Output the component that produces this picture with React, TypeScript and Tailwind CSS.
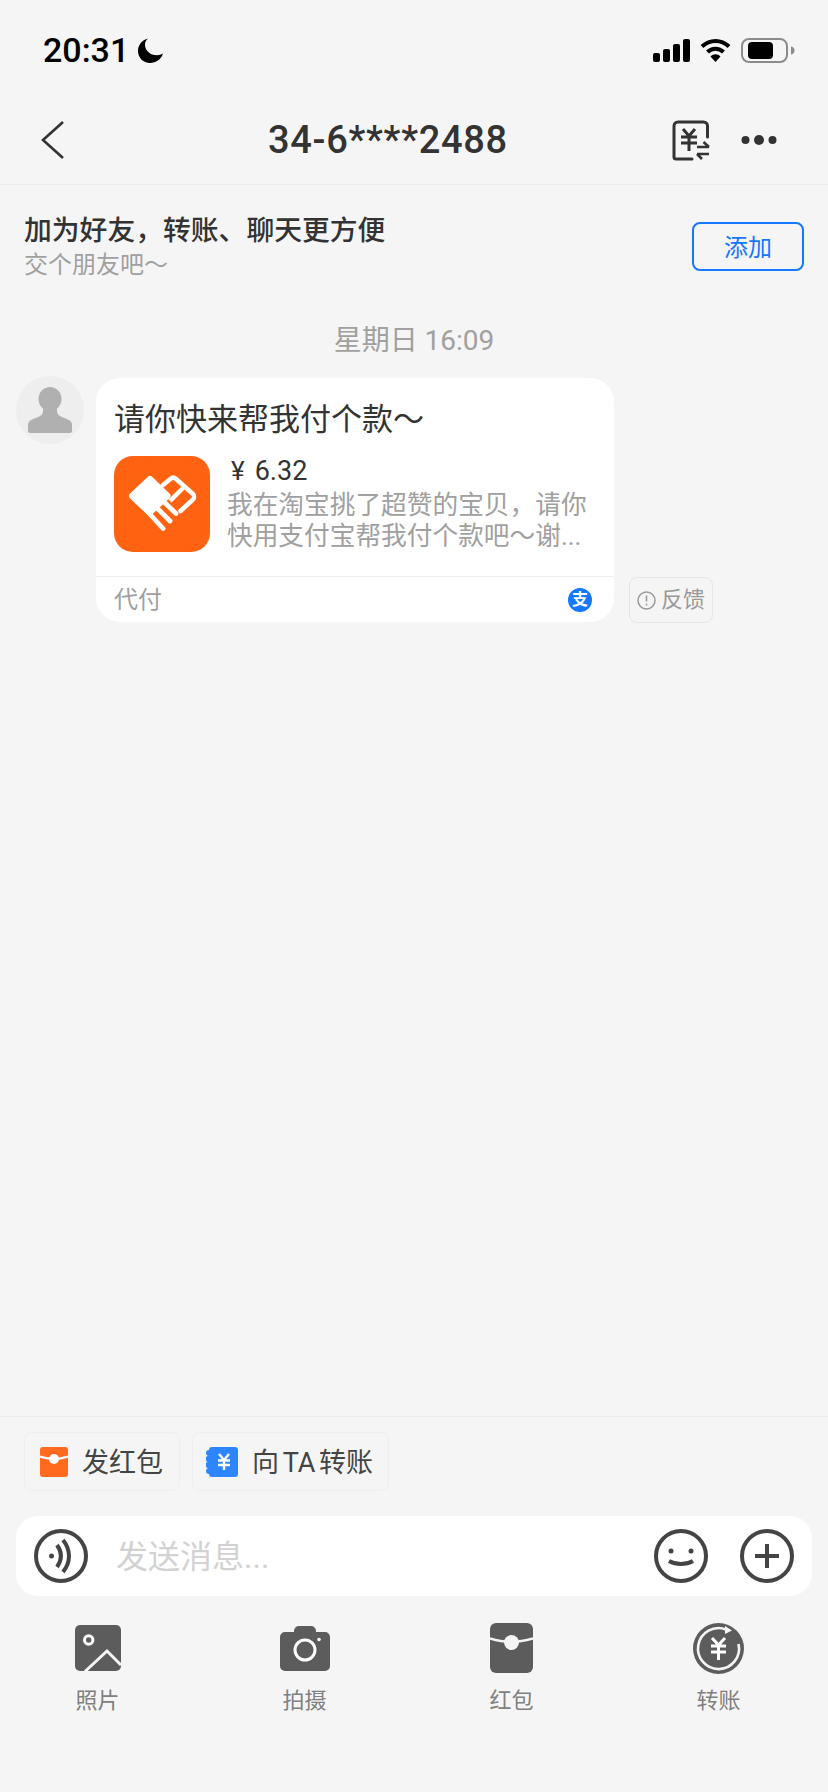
import React from "react";

function Moon() {
  return (
    <svg viewBox="0 0 25 25" className="ml-[9px] h-[25px] w-[25px]">
      <path d="M10 0.5C4 2 0 7 0 13c0 7 5.500 12 12 12 6 0 11-3.500 13-9.500-2 1.200-4 1.700-6 1.700-7 0-12-5-12-10.500C7 4 8 2 10 0.500z" fill="#000" />
    </svg>
  );
}

function StatusIcons() {
  return (
    <div className="flex items-center">
      <svg viewBox="0 0 37 23" className="h-[23px] w-[37px]">
        <rect x="0" y="14" width="7" height="9" rx="2" fill="#000" />
        <rect x="10" y="10" width="7" height="13" rx="2" fill="#000" />
        <rect x="20" y="5" width="7" height="18" rx="2" fill="#000" />
        <rect x="30" y="0" width="7" height="23" rx="2" fill="#000" />
      </svg>
      <svg viewBox="0 0 31 24" className="ml-[10px] h-[24px] w-[31px]">
        <path d="M2 8.500C10 1 21 1 29 8.500" stroke="#000" strokeWidth="4" fill="none" />
        <path d="M7.500 14C12 9.500 19 9.500 23.500 14" stroke="#000" strokeWidth="4" fill="none" />
        <path d="M15.500 24L10.500 18.500C13.500 15.500 17.500 15.500 20.500 18.500z" fill="#000" />
      </svg>
      <svg viewBox="0 0 54 25" className="ml-[10px] h-[25px] w-[54px]">
        <rect x="1" y="1" width="45" height="23" rx="7" stroke="#8c8c8c" strokeWidth="2" fill="none" />
        <rect x="7" y="4" width="25" height="17" rx="4" fill="#000" />
        <path d="M50 8.500c2.500 0.500 3.500 2 3.500 4s-1 3.500-3.500 4z" fill="#8c8c8c" />
      </svg>
    </div>
  );
}

function Chevron() {
  return (
    <svg viewBox="0 0 23 38" className="h-[38px] w-[23px] shrink-0">
      <path d="M22 1L2 19l20 18" stroke="#333" strokeWidth="2.600" fill="none" />
    </svg>
  );
}

function TransferNav() {
  return (
    <svg viewBox="0 0 38 41" className="h-[41px] w-[38px]">
      <path d="M35.500 17V6a4 4 0 0 0-4-4H6a4 4 0 0 0-4 4v31a2 2 0 0 0 2 2h16" stroke="#333" strokeWidth="3" strokeLinecap="round" fill="none" />
      <path d="M11 9l6 7 6-7M9 17h16M9 23h16M17 16v15" stroke="#333" strokeWidth="3" fill="none" />
      <path d="M25 27h12M31.500 22l5.500 5M37 34H25M30 39l-5-5" stroke="#333" strokeWidth="2.600" fill="none" />
    </svg>
  );
}

function Dots() {
  return (
    <svg viewBox="0 0 36 12" className="ml-[31px] h-[12px] w-[36px]">
      <circle cx="4.500" cy="6" r="4" fill="#333" />
      <circle cx="18" cy="6" r="5" fill="#333" />
      <circle cx="31.500" cy="6" r="4" fill="#333" />
    </svg>
  );
}

function AvatarIcon() {
  return (
    <div className="flex h-[68px] w-[68px] shrink-0 items-center justify-center rounded-full bg-[#eeeeee]">
      <svg viewBox="0 0 44 46" className="h-[46px] w-[44px]">
        <ellipse cx="22" cy="12" rx="11.500" ry="12" fill="#b0b0b0" />
        <path d="M15 20h14v4c0 3 2 5 5 6l7 3c2 1 3 3 3 5v6c0 1-1 2-2 2H2c-1 0-2-1-2-2v-6c0-2 1-4 3-5l7-3c3-1 5-3 5-6z" fill="#b0b0b0" />
      </svg>
    </div>
  );
}

function HeartLogo() {
  return (
    <svg viewBox="0 0 96 96" className="h-[96px] w-[96px] shrink-0">
      <rect width="96" height="96" rx="19" fill="#ff6311" />
      <path d="M18.500 40L36 23.500 53 40 35.500 56z" fill="#fff" stroke="#fff" strokeWidth="7" strokeLinejoin="round" />
      <path d="M49 29l8-6.500a3.500 3.500 0 0 1 4.500 0l17.500 15.500a4 4 0 0 1 0 5.500L66.500 55" stroke="#fff" strokeWidth="4.500" fill="none" strokeLinejoin="round" strokeLinecap="round" />
      <path d="M56 45l14-14" stroke="#fff" strokeWidth="4.500" fill="none" />
      <path d="M34 56l15 16.500M42 51l14 14M49 45l13 12.500" stroke="#fff" strokeWidth="4.800" strokeLinecap="round" fill="none" />
    </svg>
  );
}

function RedPacketChip() {
  return (
    <svg viewBox="0 0 28 30" className="h-[30px] w-[28px] shrink-0">
      <rect width="28" height="30" rx="3" fill="#ff6a1f" />
      <path d="M0 9.500C5 11 9 12 14 12s9-1 14-2.500" stroke="#fff" strokeWidth="2.200" fill="none" />
      <circle cx="14" cy="12" r="5" fill="#fff" />
    </svg>
  );
}

function TicketChip() {
  return (
    <svg viewBox="0 0 32 30" className="h-[30px] w-[32px] shrink-0">
      <path d="M6 0h23a3 3 0 0 1 3 3v24a3 3 0 0 1-3 3H6a3 3 0 0 1-3-3 3 3 0 0 1 0-6 3 3 0 0 1-1-6 3 3 0 0 1 1-6 3 3 0 0 1 0-6 3 3 0 0 1 3-3z" fill="#2e86ff" />
      <path d="M13 7l5 6 5-6M12 13.500h12M12 18h12M18 13v10" stroke="#fff" strokeWidth="2.400" fill="none" />
    </svg>
  );
}

function Voice() {
  return (
    <svg viewBox="0 0 54 54" className="h-[54px] w-[54px] shrink-0">
      <circle cx="27" cy="27" r="25" stroke="#444" strokeWidth="4" fill="none" />
      <circle cx="17.500" cy="27" r="2.500" fill="#444" />
      <path d="M23 16c5 7 5 15 0 22" stroke="#444" strokeWidth="4" fill="none" />
      <path d="M29 11c8 10 8 22 0 32" stroke="#444" strokeWidth="4" fill="none" />
    </svg>
  );
}

function Smile() {
  return (
    <svg viewBox="0 0 54 54" className="h-[54px] w-[54px] shrink-0">
      <circle cx="27" cy="27" r="25" stroke="#444" strokeWidth="4" fill="none" />
      <circle cx="17" cy="22" r="2.500" fill="#444" />
      <circle cx="37" cy="22" r="2.500" fill="#444" />
      <path d="M15 32c7 4 17 4 24 0" stroke="#444" strokeWidth="4" fill="none" />
    </svg>
  );
}

function Plus() {
  return (
    <svg viewBox="0 0 54 54" className="ml-[32px] h-[54px] w-[54px] shrink-0">
      <circle cx="27" cy="27" r="25" stroke="#444" strokeWidth="4" fill="none" />
      <path d="M15 27h24M27 15v24" stroke="#444" strokeWidth="4" fill="none" />
    </svg>
  );
}

function PhotoIcon() {
  return (
    <svg viewBox="0 0 46 46" className="h-[46px] w-[46px]">
      <rect width="46" height="46" rx="5" fill="#5c5c5c" />
      <circle cx="13.700" cy="15" r="4.200" stroke="#fff" strokeWidth="3" fill="none" />
      <path d="M10 46.500L32 26l14 14" stroke="#f5f5f5" strokeWidth="3" fill="none" />
    </svg>
  );
}

function CameraIcon() {
  return (
    <svg viewBox="0 0 50 45" className="h-[45px] w-[50px]">
      <path d="M14 6V5a5 5 0 0 1 5-5h12a5 5 0 0 1 5 5v1h9a5 5 0 0 1 5 5v29a5 5 0 0 1-5 5H5a5 5 0 0 1-5-5V11a5 5 0 0 1 5-5z" fill="#5c5c5c" />
      <circle cx="25" cy="24" r="10" stroke="#fff" strokeWidth="3" fill="none" />
      <circle cx="39" cy="13.500" r="1.800" fill="#fff" />
    </svg>
  );
}

function PacketIcon() {
  return (
    <svg viewBox="0 0 43 50" className="h-[50px] w-[43px]">
      <rect width="43" height="50" rx="6" fill="#5c5c5c" />
      <path d="M0 15.500C7 17.500 14 19 21.500 19S36 17.500 43 15.500" stroke="#f5f5f5" strokeWidth="2.400" fill="none" />
      <circle cx="21.500" cy="19.500" r="7.500" fill="#f5f5f5" />
    </svg>
  );
}

function TransferIcon() {
  return (
    <svg viewBox="0 0 51 51" className="h-[51px] w-[51px]">
      <circle cx="25.500" cy="25.500" r="25.500" fill="#5c5c5c" />
      <path d="M33 6.500A20.500 20.500 0 1 0 45.500 21" stroke="#f5f5f5" strokeWidth="2.600" fill="none" />
      <path d="M32 3l7 4.500-7 3.500z" fill="#f5f5f5" />
      <path d="M19 15l6.500 7 6.500-7M18 23h15M18 29h15M25.500 22v15" stroke="#fff" strokeWidth="3" fill="none" />
    </svg>
  );
}

const tools = [
  { label: "照片", icon: <PhotoIcon /> },
  { label: "拍摄", icon: <CameraIcon /> },
  { label: "红包", icon: <PacketIcon /> },
  { label: "转账", icon: <TransferIcon /> },
];

export default function App() {
  return (
    <div className="flex h-[1792px] w-[828px] flex-col overflow-hidden bg-[#f5f5f5] font-['Roboto','Noto_Sans_CJK_SC',sans-serif] text-[#333]">
      <div className="flex h-[100px] items-center justify-between pl-[43px] pr-[33px]">
        <div className="flex items-center text-black">
          <span className="text-[34px] leading-none font-medium">20:31</span>
          <Moon />
        </div>
        <StatusIcons />
      </div>

      <div className="flex h-[85px] items-center border-b border-[#ececec] pb-[4px] pl-[41px] pr-[51px]">
        <Chevron />
        <span className="ml-[204px] text-[38px] leading-none font-medium tracking-[0.7px] text-[#333]">34-6****2488</span>
        <div className="ml-auto flex items-center">
          <TransferNav />
          <Dots />
        </div>
      </div>

      <div className="flex h-[122px] items-center justify-between pl-[24px] pr-[24px]">
        <div className="flex flex-col pt-[2px]">
          <span className="text-[27.8px] leading-[36px] font-medium text-[#333]">{"加为好友\uFF0C转账、聊天更方便"}</span>
          <span className="text-[24px] leading-[32px] text-[#a0a0a0]">{"交个朋友吧\uFF5E"}</span>
        </div>
        <button className="flex h-[49px] w-[112px] items-center justify-center rounded-[8px] border-2 border-[#1677ff] pt-[3px] text-[24px] text-[#1677ff]">添加</button>
      </div>

      <div className="flex h-[68px] items-center justify-center text-[28px] leading-none text-[#a0a0a0]">星期日 16:09</div>

      <div className="mt-[1px] flex items-start pl-[16px]">
        <AvatarIcon />
        <div className="mt-[2px] ml-[12px] w-[518px] rounded-[24px] bg-white">
          <div className="pt-[24px] pl-[18px] text-[31px] leading-[36px] text-[#333]">{"请你快来帮我付个款\uFF5E"}</div>
          <div className="mt-[18px] flex pl-[18px]">
            <HeartLogo />
            <div className="ml-[17px]">
              <div className="flex items-baseline pl-[4px] text-[27px] leading-[30px] text-[#333]">
                <span className="text-[26px]">¥</span>
                <span className="ml-[10px]">6.32</span>
              </div>
              <div className="mt-[4px] text-[25.7px] leading-[31px] text-[#a0a0a0]">
                <div>{"我在淘宝挑了超赞的宝贝\uFF0C请你"}</div>
                <div>{"快用支付宝帮我付个款吧\uFF5E谢..."}</div>
              </div>
            </div>
          </div>
          <div className="mt-[24px] flex h-[46px] items-center justify-between border-t border-[#eeeeee] pr-[22px] pl-[18px]">
            <span className="text-[24px] text-[#a0a0a0]">代付</span>
            <span className="flex h-[24px] w-[24px] items-center justify-center rounded-full bg-[#1677ff] text-[16px] leading-none font-bold text-white">支</span>
          </div>
        </div>
        <div className="mt-[201px] ml-[15px] flex h-[46px] w-[84px] items-center justify-center rounded-[8px] border border-[#e6e6e6]">
          <svg viewBox="0 0 19 19" className="h-[19px] w-[19px]">
            <circle cx="9.500" cy="9.500" r="8.500" stroke="#999" strokeWidth="1.500" fill="none" />
            <path d="M9.500 4.500v6M9.500 12.500v2" stroke="#999" strokeWidth="1.500" fill="none" />
          </svg>
          <span className="ml-[5px] text-[22px] leading-none text-[#999]">反馈</span>
        </div>
      </div>

      <div className="flex-1" />

      <div className="h-[376px] border-t border-[#ececec] pt-[15px]">
        <div className="flex gap-[12px] pl-[24px]">
          <div className="flex h-[59px] w-[156px] items-center rounded-[8px] border border-[#eeeeee] pl-[15px]">
            <RedPacketChip />
            <span className="ml-[14px] pt-[4px] text-[27px] leading-none text-[#444]">发红包</span>
          </div>
          <div className="flex h-[59px] w-[197px] items-center rounded-[8px] border border-[#eeeeee] pl-[13px]">
            <TicketChip />
            <span className="ml-[14px] pt-[4px] text-[27px] leading-none text-[#444] [word-spacing:-3px]">向 TA 转账</span>
          </div>
        </div>

        <div className="mx-[16px] mt-[25px] flex h-[80px] items-center rounded-[22px] bg-white px-[18px]">
          <Voice />
          <span className="ml-[28px] flex-1 pt-[2px] text-[32px] leading-none text-[#d2d2d2]">发送消息...</span>
          <Smile />
          <Plus />
        </div>

        <div className="mt-[24px] -ml-[6px] grid w-[828px] grid-cols-4">
          {tools.map((t) => (
            <div key={t.label} className="flex flex-col items-center">
              <div className="flex h-[56px] items-center justify-center">{t.icon}</div>
              <span className="mt-[11px] text-[22px] leading-[28px] text-[#808080]">{t.label}</span>
            </div>
          ))}
        </div>
      </div>
    </div>
  );
}
